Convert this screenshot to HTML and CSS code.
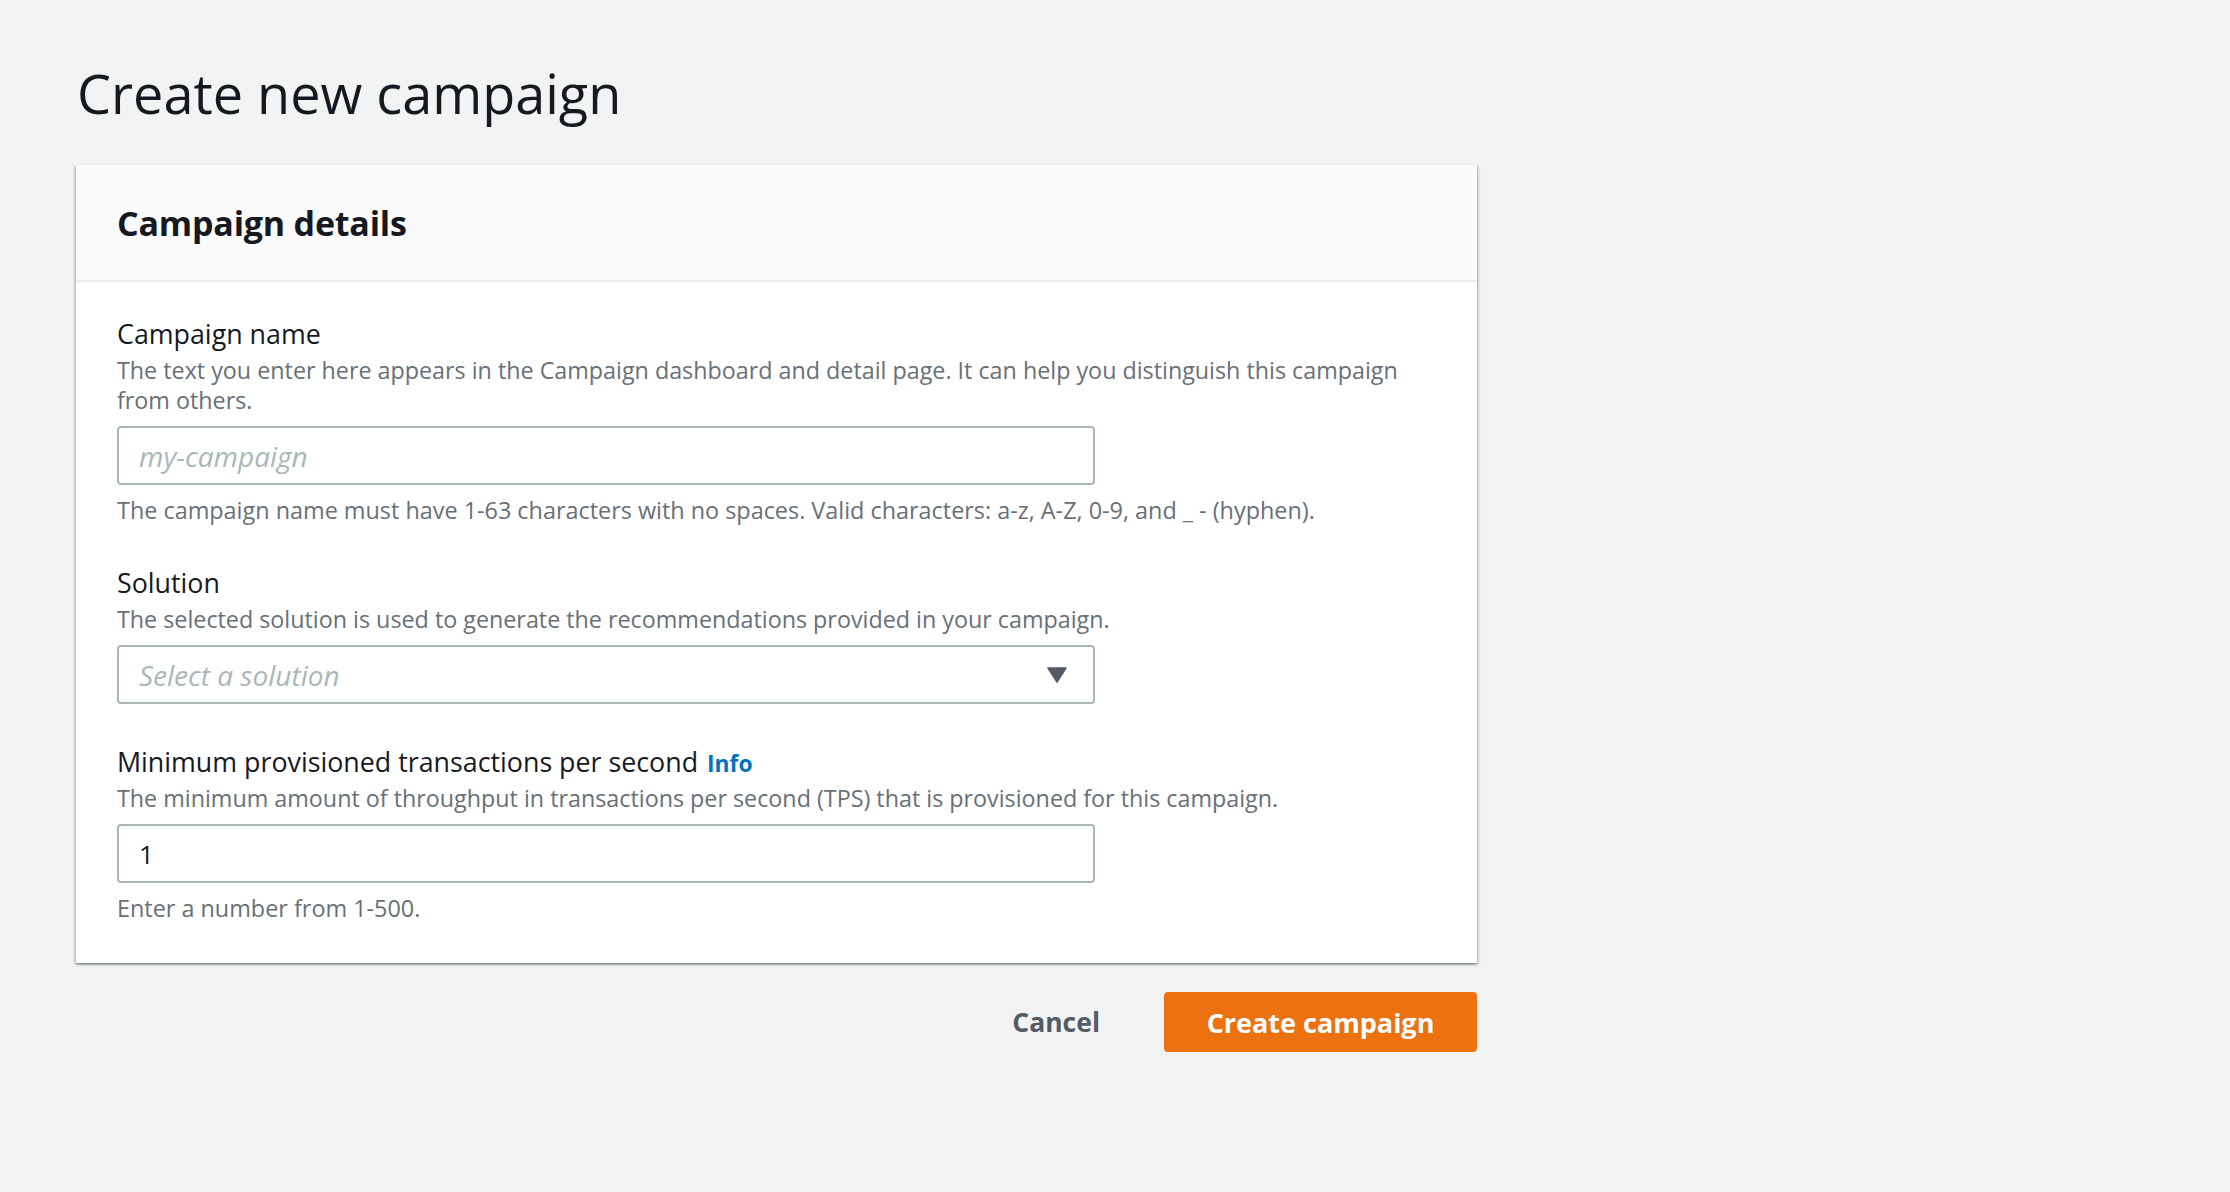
FILE: index.html
```html
<!DOCTYPE html>
<html>
<head>
<meta charset="utf-8">
<link rel="stylesheet" href="styles.css">
</head>
<body>
<div class="page">
  <h1 class="title">Create new campaign</h1>
  <div class="card">
    <div class="card-header">
      <h2 class="card-title">Campaign details</h2>
    </div>
    <div class="card-body">
      <div class="field">
        <div class="label">Campaign name</div>
        <div class="desc">The text you enter here appears in the Campaign dashboard and detail page. It can help you distinguish this campaign from others.</div>
        <div class="input"><span class="placeholder">my-campaign</span></div>
        <div class="constraint">The campaign name must have 1-63 characters with no spaces. Valid characters: a-z, A-Z, 0-9, and _ - (hyphen).</div>
      </div>
      <div class="field">
        <div class="label">Solution</div>
        <div class="desc">The selected solution is used to generate the recommendations provided in your campaign.</div>
        <div class="input select"><span class="placeholder">Select a solution</span>
          <svg class="caret" width="20" height="16" viewBox="0 0 20 16"><path d="M1 1 H19 L10 15 Z" fill="#545b64" stroke="#545b64" stroke-width="1.5" stroke-linejoin="round"/></svg>
        </div>
      </div>
      <div class="field">
        <div class="label">Minimum provisioned transactions per second <span class="info">Info</span></div>
        <div class="desc">The minimum amount of throughput in transactions per second (TPS) that is provisioned for this campaign.</div>
        <div class="input"><span class="value">1</span></div>
        <div class="constraint">Enter a number from 1-500.</div>
      </div>
    </div>
  </div>
  <div class="actions">
    <button class="btn-link">Cancel</button>
    <button class="btn-primary">Create campaign</button>
  </div>
</div>
</body>
</html>
```
FILE: styles.css
```css
html, body {
  margin: 0;
  padding: 0;
  background: #f2f3f3;
}
body {
  font-family: "Open Sans", "Liberation Sans", sans-serif;
  color: #16191f;
}
.page {
  width: 1401px;
  padding: 58px 0 0 76px;
}
.title {
  margin: 0 0 0 1px;
  font-size: 54px;
  line-height: 70px;
  font-weight: 400;
  color: #16191f;
}
.card {
  margin-top: 37px;
  background: #fff;
  box-shadow: 0 2px 2px 0 rgba(0,28,36,.3), 2px 1px 2px 0 rgba(0,28,36,.15), -2px 1px 2px 0 rgba(0,28,36,.15);
}
.card-header {
  height: 115px;
  background: #fafafa;
  border-bottom: 2px solid #eaeded;
  display: flex;
  align-items: center;
  padding: 0 41px;
}
.card-title {
  margin: 0;
  font-size: 34px;
  font-weight: 700;
  letter-spacing: -0.2px;
}
.card-body {
  padding: 36px 41px 40px;
  display: flex;
  flex-direction: column;
  gap: 42px;
}
.field {
  display: flex;
  flex-direction: column;
}
.label {
  font-size: 26.8px;
  line-height: 32px;
  color: #16191f;
}
.info {
  color: #0073bb;
  font-weight: 700;
  font-size: 22.8px;
  line-height: 1;
  margin-left: 2px;
}
.desc {
  margin-top: 5px;
  font-size: 23.3px;
  line-height: 30px;
  color: #687078;
}
.input {
  margin-top: 11px;
  width: 978px;
  height: 59px;
  box-sizing: border-box;
  border: 2px solid #aab7b8;
  border-radius: 4px;
  background: #fff;
  display: flex;
  align-items: center;
  padding: 0 20px;
  font-size: 28px;
}
.placeholder {
  color: #aab7b8;
  font-style: italic;
}
.value {
  color: #16191f;
  font-size: 26px;
}
.select {
  justify-content: space-between;
  padding-right: 26px;
}
.constraint {
  margin-top: 10px;
  font-size: 23.4px;
  line-height: 30px;
  color: #687078;
}
.actions {
  margin-top: 29px;
  display: flex;
  justify-content: flex-end;
  align-items: center;
  gap: 36px;
}
.btn-link {
  background: none;
  border: none;
  font-family: inherit;
  font-weight: 700;
  font-size: 26.5px;
  color: #545b64;
  padding: 0 28px;
  height: 60px;
}
.btn-primary {
  background: #ec7211;
  border: none;
  border-radius: 4px;
  color: #fff;
  font-family: inherit;
  font-weight: 700;
  font-size: 27px;
  height: 60px;
  width: 313px;
}
```
